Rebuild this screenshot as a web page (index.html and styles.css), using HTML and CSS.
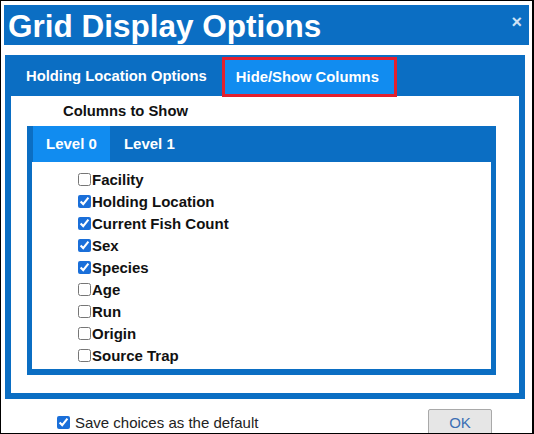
FILE: index.html
```html
<!DOCTYPE html>
<html>
<head>
<meta charset="utf-8">
<link rel="stylesheet" href="styles.css">
</head>
<body>
<div class="frame">
  <div class="titlebar">
    <span class="title">Grid Display Options</span>
    <span class="close">×</span>
  </div>
  <div class="panel">
    <div class="tabs">
      <div class="tab">Holding Location Options</div>
      <div class="tab active">Hide/Show Columns</div>
    </div>
    <div class="panel-body">
      <div class="heading">Columns to Show</div>
      <div class="inner">
        <div class="subtabs">
          <div class="subtab active">Level 0</div>
          <div class="subtab">Level 1</div>
        </div>
        <div class="list">
          <label class="item"><input type="checkbox">Facility</label>
          <label class="item"><input type="checkbox" checked>Holding Location</label>
          <label class="item"><input type="checkbox" checked>Current Fish Count</label>
          <label class="item"><input type="checkbox" checked>Sex</label>
          <label class="item"><input type="checkbox" checked>Species</label>
          <label class="item"><input type="checkbox">Age</label>
          <label class="item"><input type="checkbox">Run</label>
          <label class="item"><input type="checkbox">Origin</label>
          <label class="item"><input type="checkbox">Source Trap</label>
        </div>
      </div>
    </div>
  </div>
  <div class="footer">
    <label class="save"><input type="checkbox" checked>Save choices as the default</label>
    <button class="ok">OK</button>
  </div>
</div>
</body>
</html>
```

FILE: styles.css
```css
html, body {
  margin: 0;
  padding: 0;
  background: #fff;
}
body {
  font-family: "Liberation Sans", Arial, sans-serif;
}
.frame {
  width: 534px;
  height: 434px;
  box-sizing: border-box;
  border: 1px solid #000;
  border-right-width: 2px;
  padding: 4px 3px 0 3px;
  overflow: hidden;
  display: flex;
  flex-direction: column;
}
.titlebar {
  height: 40px;
  background: #0b6ec3;
  color: #fff;
  display: flex;
  align-items: center;
  justify-content: space-between;
  padding: 0 7px 0 4px;
  flex-shrink: 0;
}
.title {
  font-size: 31.5px;
  font-weight: bold;
  line-height: 40px;
  margin-top: 1px;
}
.close {
  font-size: 18px;
  font-weight: bold;
  color: #cfe2f4;
  margin-top: -6px;
}
.panel {
  margin: 10px 4px 0 1px;
  background: #0b6ec3;
  padding: 0 6px 6px 6px;
  flex-shrink: 0;
}
.tabs {
  display: flex;
  height: 41px;
  align-items: flex-end;
}
.tab {
  color: #fff;
  font-size: 14.8px;
  font-weight: bold;
  height: 40px;
  line-height: 40px;
  padding: 0 15px;
  box-sizing: border-box;
}
.tab.active {
  background: #118cf0;
  border: 3px solid #e3202e;
  line-height: 34px;
  padding: 0 15px 0 11px;
  margin-bottom: -1px;
  position: relative;
  z-index: 1;
}
.panel-body {
  background: #fff;
  height: 297px;
  padding: 6px 23px 0 16px;
  box-sizing: border-box;
}
.heading {
  font-size: 14.8px;
  font-weight: bold;
  color: #111;
  padding-left: 36px;
  line-height: 18px;
}
.inner {
  margin-top: 6px;
  background: #0b6ec3;
  padding: 0 5px 6px 5px;
}
.subtabs {
  display: flex;
  height: 36px;
}
.subtab {
  color: #fff;
  font-size: 15px;
  font-weight: bold;
  line-height: 36px;
  padding: 0 14px;
}
.subtab.active {
  background: #118cf0;
  padding: 0 13px;
  margin-left: 1px;
}
.list {
  background: #fff;
  height: 207px;
  overflow: hidden;
  padding: 6px 0 0 46px;
  box-sizing: border-box;
}
.item {
  display: flex;
  align-items: center;
  height: 22.1px;
  font-size: 15px;
  font-weight: bold;
  color: #111;
}
.item input, .save input {
  width: 13px;
  height: 13px;
  margin: 0 1px 0 0;
  accent-color: #1a6fd9;
}
.footer {
  display: flex;
  align-items: flex-start;
  justify-content: space-between;
  padding: 10px 37px 0 53px;
}
.save {
  display: flex;
  align-items: center;
  font-size: 15px;
  color: #222;
  margin-top: 5px;
}
.save input {
  margin-right: 5px;
}
.ok {
  width: 64px;
  height: 26px;
  background: #e6e6e6;
  border: 1px solid #a9a9a9;
  border-radius: 2px;
  color: #3b6fb4;
  font-family: "Liberation Sans", Arial, sans-serif;
  font-size: 15px;
  padding: 0;
}
```
